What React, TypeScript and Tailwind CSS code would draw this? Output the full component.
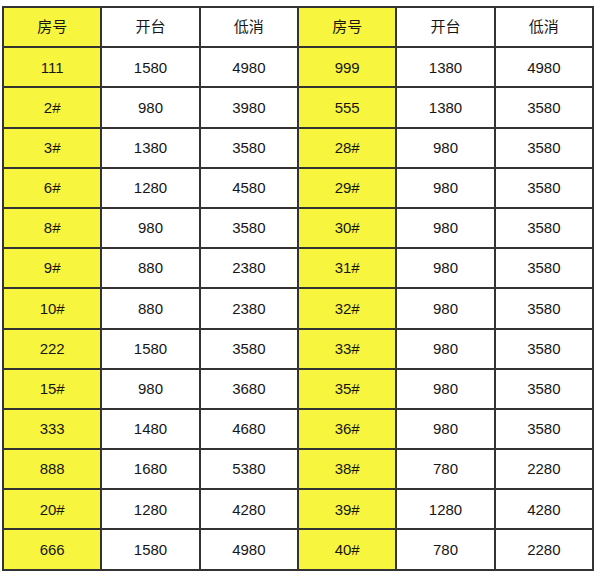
const left: [string, string, string][] = [
  ["111", "1580", "4980"],
  ["2#", "980", "3980"],
  ["3#", "1380", "3580"],
  ["6#", "1280", "4580"],
  ["8#", "980", "3580"],
  ["9#", "880", "2380"],
  ["10#", "880", "2380"],
  ["222", "1580", "3580"],
  ["15#", "980", "3680"],
  ["333", "1480", "4680"],
  ["888", "1680", "5380"],
  ["20#", "1280", "4280"],
  ["666", "1580", "4980"],
];

const right: [string, string, string][] = [
  ["999", "1380", "4980"],
  ["555", "1380", "3580"],
  ["28#", "980", "3580"],
  ["29#", "980", "3580"],
  ["30#", "980", "3580"],
  ["31#", "980", "3580"],
  ["32#", "980", "3580"],
  ["33#", "980", "3580"],
  ["35#", "980", "3580"],
  ["36#", "980", "3580"],
  ["38#", "780", "2280"],
  ["39#", "1280", "4280"],
  ["40#", "780", "2280"],
];

function Cell({ text, yellow }: { text: string; yellow?: boolean }) {
  return (
    <div
      className={`flex h-[40.2px] items-center justify-center border-r-2 border-b-2 border-[#333333] pt-[1px] text-[15px] text-[#161616] ${
        yellow ? "bg-[#f8f53e]" : "bg-white"
      }`}
    >
      {text}
    </div>
  );
}

export default function App() {
  const header = ["房号", "开台", "低消", "房号", "开台", "低消"];

  return (
    <div
      className="min-h-screen bg-white pt-[6px] pl-[2px]"
      style={{ fontFamily: '"Liberation Sans", Arial, "Noto Sans CJK SC", sans-serif' }}
    >
      <div className="grid w-[592px] grid-cols-6 border-t-2 border-l-2 border-[#333333]">
        {header.map((h, i) => (
          <Cell key={i} text={h} yellow={i % 3 === 0} />
        ))}
        {left.map((row, r) => (
          <div key={r} className="contents">
            <Cell text={row[0]} yellow />
            <Cell text={row[1]} />
            <Cell text={row[2]} />
            <Cell text={right[r][0]} yellow />
            <Cell text={right[r][1]} />
            <Cell text={right[r][2]} />
          </div>
        ))}
      </div>
    </div>
  );
}
